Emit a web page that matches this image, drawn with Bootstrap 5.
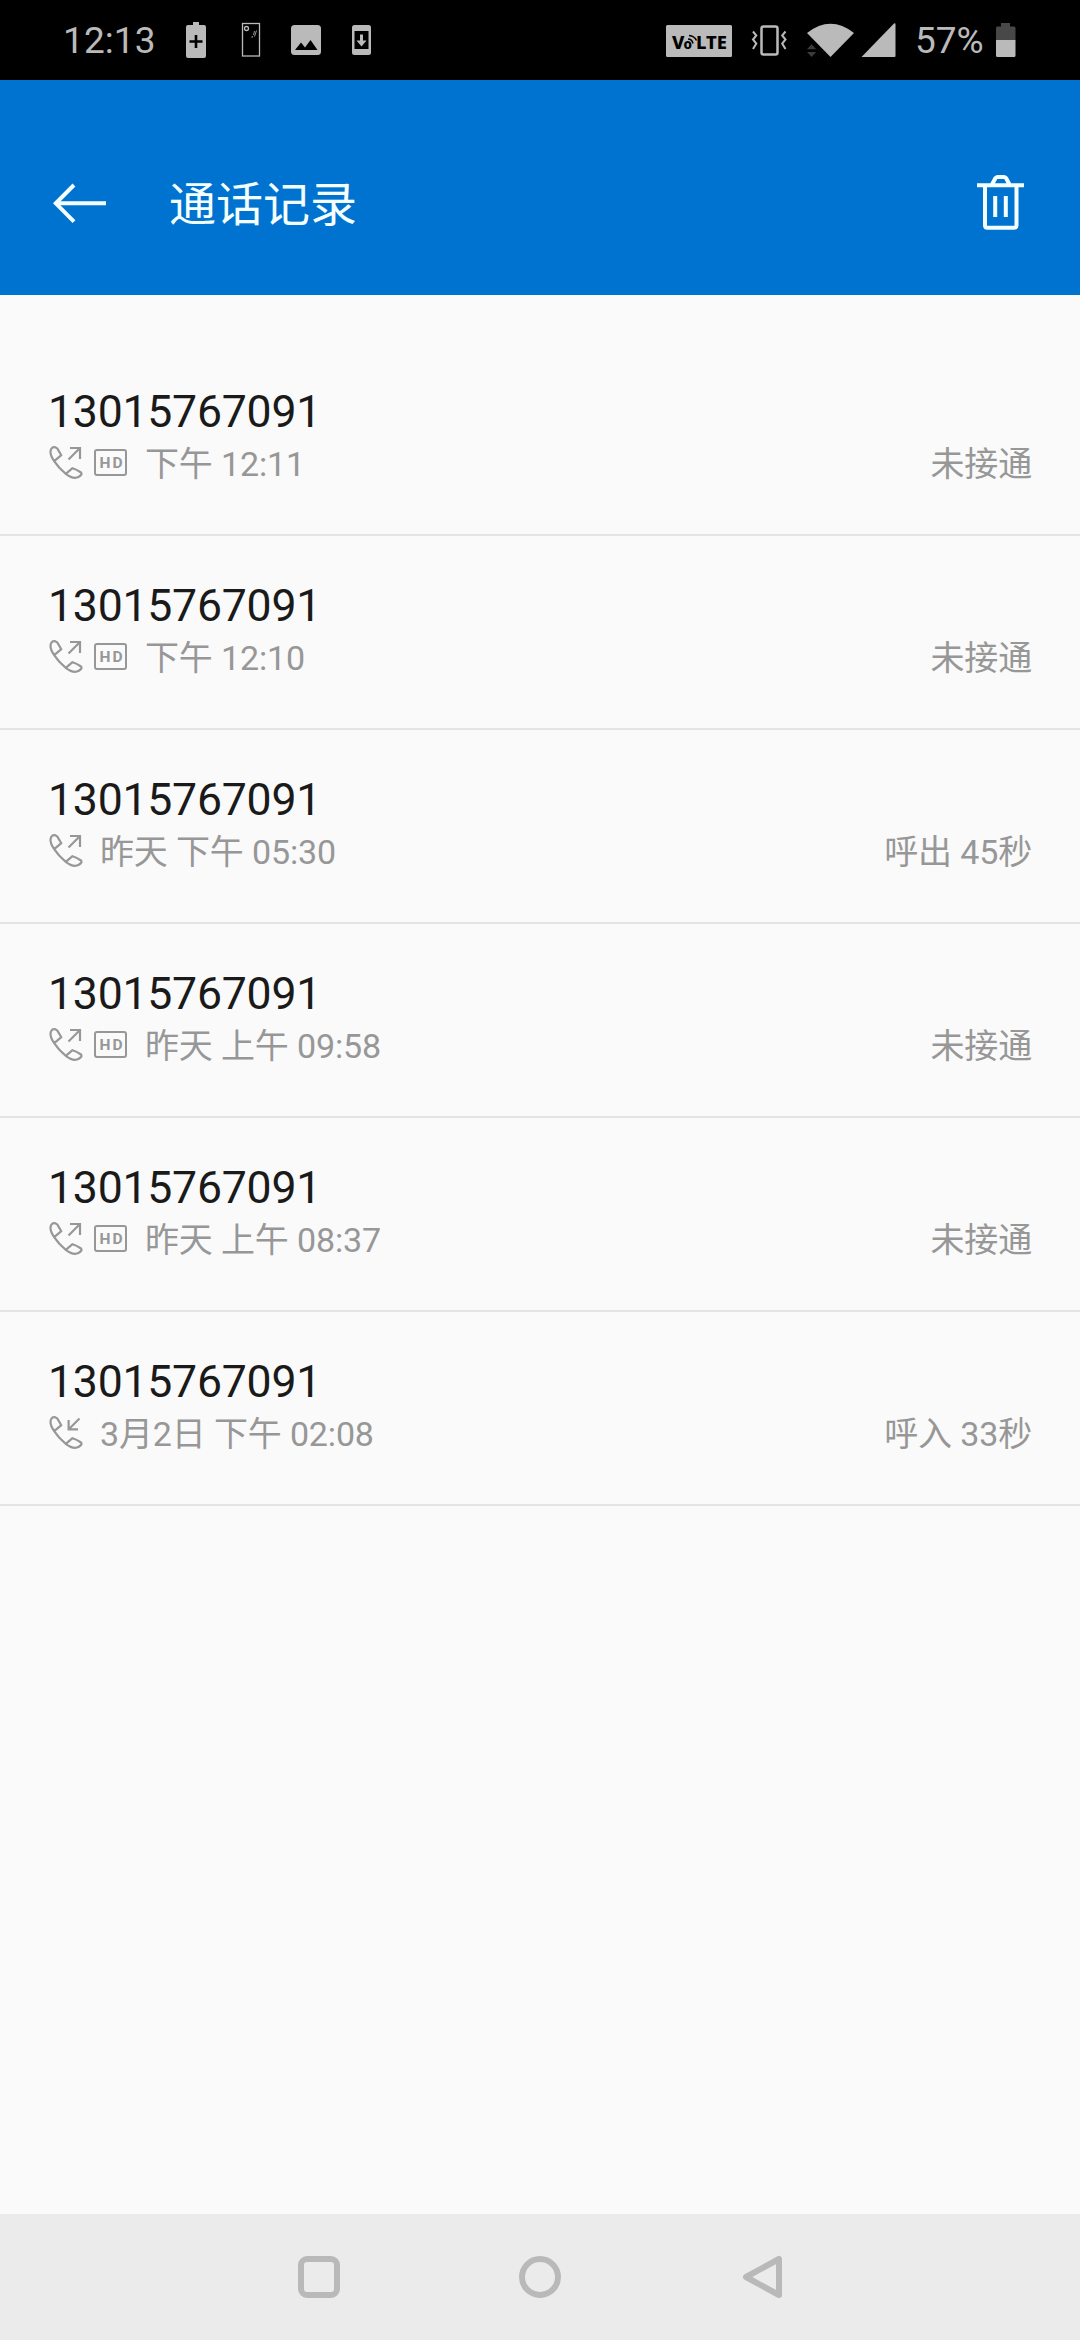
<!DOCTYPE html>
<html lang="zh-CN">
<head>
<meta charset="utf-8">
<meta name="viewport" content="width=device-width, initial-scale=1">
<title>通话记录</title>
<link rel="stylesheet" href="https://cdn.jsdelivr.net/npm/bootstrap@5.3.0/dist/css/bootstrap.min.css">
<style>
  body { background: #fafafa; font-family: Roboto, "Noto Sans CJK SC", sans-serif; height: 2340px; overflow: hidden; }
  svg { display: block; flex: none; }
  .status-bar { height: 80px; background: #000; color: #bababa; font-size: 37px; line-height: 80px; padding: 0 55px 0 63px; }
  .clock { width: 103px; letter-spacing: .1px; padding-top: 2px; }
  .percent { width: 76px; padding-top: 2px; }
  .app-header { height: 215px; background: #0072d0; color: #f4ffff; padding: 0 48px; }
  .app-title { font-size: 47px; line-height: 60px; padding-top: 34px; margin-left: 61px; font-weight: 400; }
  .call-list { padding-top: 47px; }
  .call-item { height: 194px; padding: 44px 48px 0; border-bottom: 2px solid #e4e4e4; }
  .call-number { color: #1a1a1a; font-size: 44.6px; line-height: 52px; letter-spacing: -.24px; }
  .call-meta { color: #979797; font-size: 34px; line-height: 40px; height: 40px; margin-top: 6px; white-space: pre; letter-spacing: -.15px; }
  .call-time { margin-left: 16px; }
  .hd-icon { margin-left: 9px; }
  .nav-keys { height: 126px; background: #ebebeb; padding: 0 297px; }
</style>
<script src="https://cdn.jsdelivr.net/npm/bootstrap@5.3.0/dist/js/bootstrap.bundle.min.js"></script>
</head>
<body class="d-flex flex-column">

<svg width="0" height="0" class="position-absolute">
  <defs>
    <g id="handset" fill="none" stroke="#979797" stroke-width="2.200" stroke-linejoin="round" stroke-linecap="round">
      <path d="M6.200 17.200 C2.600 12 1.400 8.500 3.200 5 Q4.800 2.400 7.500 3.400 L9.200 4.400 L13.300 11.200 L6.200 17.200 Q10.500 24 17.800 29.800 L24.500 24.200 Q28.500 25.200 33 28.500 Q34.600 30.600 30.800 32.800 Q25.500 35.800 17.800 29.800"/>
    </g>
    <g id="hd">
      <rect x="2" y="6" width="31" height="25" rx="2" fill="none" stroke="#979797" stroke-width="2"/>
      <text x="6.500" y="24" font-family="Roboto, sans-serif" font-weight="700" font-size="15.500" textLength="23" fill="#979797">HD</text>
    </g>
    <path id="arrow-out" d="M20.500 15.500 L31.500 4.500 M22 4 H32 V15" fill="none" stroke="#979797" stroke-width="2.200"/>
    <path id="arrow-in" d="M31.500 4.500 L21.500 14.500 M20.600 6 V15.400 H30" fill="none" stroke="#979797" stroke-width="2.200"/>
  </defs>
</svg>

<div class="status-bar d-flex align-items-center justify-content-between">
  <div class="d-flex align-items-center">
    <span class="clock">12:13</span>
    <svg width="58" height="80" viewBox="166 0 58 80"><path d="M193 22h6v3h5q2 0 2 2v29q0 2-2 2h-16q-2 0-2-2V27q0-2 2-2h5z" fill="#bababa"/><path d="M196 35v13M189.500 41.500h13" stroke="#000" stroke-width="2.600"/></svg>
    <svg width="52" height="80" viewBox="224 0 52 80"><g fill="none" stroke="#bababa"><rect x="242.500" y="23.500" width="17" height="32.500" stroke-width="1.300"/><circle cx="246.500" cy="28.500" r="2" stroke-width="1.300"/><path d="M254.500 31l-1 4M252.500 36l-.7 2M256.500 30.500l-2 6" stroke-width=".8"/></g></svg>
    <svg width="60" height="80" viewBox="276 0 60 80"><rect x="291" y="25" width="30" height="30" rx="3.500" fill="#bababa"/><path d="M295 50l6-7.500 4 5 5.500-7.500 7 10z" fill="#000"/></svg>
    <svg width="50" height="80" viewBox="336 0 50 80"><rect x="352" y="25" width="19" height="30" rx="2.500" fill="#bababa"/><path d="M354.500 31h14v18h-14z" fill="#000"/><path d="M360 34.500h3v6h3.500l-5 6-5-6h3.500z" fill="#bababa"/></svg>
  </div>
  <div class="d-flex align-items-center">
    <svg width="78" height="80" viewBox="664 0 78 80"><rect x="666" y="25" width="66" height="32" rx="1.500" fill="#bababa"/>
      <g font-family="Noto Sans, sans-serif" font-weight="800" fill="#000"><text x="672" y="48.500" font-size="18.500">V</text><text x="683.500" y="48.500" font-size="13.500">o</text><text x="696" y="48.500" font-size="18.500" textLength="31" lengthAdjust="spacingAndGlyphs">LTE</text></g>
      <path d="M688 39q4 0 5 4.500M689 35.500q5.500.5 7.500 5" fill="none" stroke="#000" stroke-width="1.500"/></svg>
    <svg width="54" height="80" viewBox="742 0 54 80"><g fill="none" stroke="#bababa"><rect x="761.500" y="26.500" width="16" height="28" rx="2" stroke-width="2.500"/><path d="M753 31.500l3.300 4-3.300 4 3.300 4-3.300 5.500M785.500 31.500l-3.300 4 3.300 4-3.300 4 3.300 5.500" stroke-width="2"/></g></svg>
    <svg width="62" height="80" viewBox="796 0 62 80"><path d="M807 33Q830.500 14.500 854 33L830.500 57z" fill="#bababa"/><path d="M807 49.200l4.600-5 4.600 5zM807 52l4.600 5 4.600-5z" fill="#3b3b3b"/></svg>
    <svg width="57" height="80" viewBox="858 0 57 80"><path d="M861.500 57L894 23.500q1.500-.8 1.500 1V56q0 1-1 1z" fill="#bababa"/></svg>
    <span class="percent">57%</span>
    <svg width="34" height="80" viewBox="991 0 34 80"><path d="M1001 23h9v3.500h4q1.500 0 1.500 1.500v12.500H996V28q0-1.500 1.500-1.500h3.500z" fill="#484848"/><path d="M996 40h19.500v15.500q0 1.500-1.500 1.500h-16.500q-1.500 0-1.500-1.500z" fill="#bababa"/></svg>
  </div>
</div>

<header class="app-header d-flex align-items-center">
  <svg width="60" height="215" viewBox="48 80 60 215"><path d="M55.500 203.300H106M74 185L55.800 203.300L74 221.600" fill="none" stroke="#f4ffff" stroke-width="4"/></svg>
  <h1 class="app-title mb-0">通话记录</h1>
  <svg class="ms-auto" width="60" height="215" viewBox="972 80 60 215"><g fill="none" stroke="#f4ffff" stroke-width="4"><path d="M977 185.300H1024M985 186V225.500Q985 227.700 987.500 227.700H1014Q1016.500 227.700 1016.500 225.500V186M992 184.500L995.500 178Q996.500 176.900 997.500 176.900H1004Q1005 176.900 1006 178L1009.500 184.500M995.200 196V217M1005.800 196V217"/></g></svg>
</header>

<main class="call-list flex-grow-1">
  <div class="call-item">
    <div class="call-number">13015767091</div>
    <div class="call-meta d-flex align-items-center">
      <svg width="36" height="40"><use href="#handset"/><use href="#arrow-out"/></svg>
      <svg class="hd-icon" width="36" height="40"><use href="#hd"/></svg>
      <span class="call-time">下午 12:11</span><span class="ms-auto">未接通</span>
    </div>
  </div>
  <div class="call-item">
    <div class="call-number">13015767091</div>
    <div class="call-meta d-flex align-items-center">
      <svg width="36" height="40"><use href="#handset"/><use href="#arrow-out"/></svg>
      <svg class="hd-icon" width="36" height="40"><use href="#hd"/></svg>
      <span class="call-time">下午 12:10</span><span class="ms-auto">未接通</span>
    </div>
  </div>
  <div class="call-item">
    <div class="call-number">13015767091</div>
    <div class="call-meta d-flex align-items-center">
      <svg width="36" height="40"><use href="#handset"/><use href="#arrow-out"/></svg>
      <span class="call-time">昨天 下午 05:30</span><span class="ms-auto">呼出 45秒</span>
    </div>
  </div>
  <div class="call-item">
    <div class="call-number">13015767091</div>
    <div class="call-meta d-flex align-items-center">
      <svg width="36" height="40"><use href="#handset"/><use href="#arrow-out"/></svg>
      <svg class="hd-icon" width="36" height="40"><use href="#hd"/></svg>
      <span class="call-time">昨天 上午 09:58</span><span class="ms-auto">未接通</span>
    </div>
  </div>
  <div class="call-item">
    <div class="call-number">13015767091</div>
    <div class="call-meta d-flex align-items-center">
      <svg width="36" height="40"><use href="#handset"/><use href="#arrow-out"/></svg>
      <svg class="hd-icon" width="36" height="40"><use href="#hd"/></svg>
      <span class="call-time">昨天 上午 08:37</span><span class="ms-auto">未接通</span>
    </div>
  </div>
  <div class="call-item">
    <div class="call-number">13015767091</div>
    <div class="call-meta d-flex align-items-center">
      <svg width="36" height="40"><use href="#handset"/><use href="#arrow-in"/></svg>
      <span class="call-time">3月2日 下午 02:08</span><span class="ms-auto">呼入 33秒</span>
    </div>
  </div>
</main>

<nav class="nav-keys d-flex align-items-center justify-content-between">
  <svg width="44" height="126"><rect x="4" y="45" width="36" height="36" rx="6" fill="none" stroke="#b9b9b9" stroke-width="6"/></svg>
  <svg width="44" height="126"><circle cx="22" cy="63" r="18" fill="none" stroke="#b9b9b9" stroke-width="6"/></svg>
  <svg width="44" height="126"><path d="M40 45V81L7 63z" fill="none" stroke="#b9b9b9" stroke-width="6" stroke-linejoin="round"/></svg>
</nav>
</body>
</html>
